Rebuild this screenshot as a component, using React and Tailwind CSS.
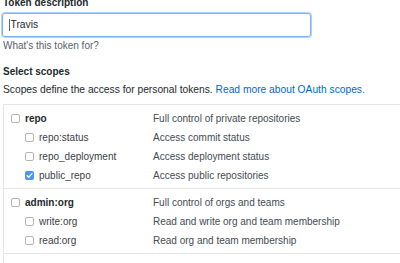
import React from "react";

const font = { fontFamily: '"Liberation Sans", Arial, Helvetica, sans-serif' };

function Box({ checked }) {
  if (checked) {
    return (
      <span className="flex h-[9px] w-[9px] shrink-0 items-center justify-center rounded-[2px] bg-[#4a96f2]">
        <svg width="7" height="7" viewBox="0 0 8 8">
          <path d="M1.3 4.2 L3.2 6 L6.8 1.8" fill="none" stroke="#fff" strokeWidth="1.5" strokeLinecap="round" strokeLinejoin="round" />
        </svg>
      </span>
    );
  }
  return <span className="h-[9px] w-[9px] shrink-0 rounded-[2px] border border-[#b5b5b5] bg-white" />;
}

function Row({ name, desc, top, checked }) {
  return (
    <div className="flex h-[19px] items-center">
      <div className={`flex w-[149px] shrink-0 items-center gap-[5px] ${top ? "pl-[7px]" : "pl-[21px]"}`}>
        <Box checked={checked} />
        <span className={top ? "font-bold text-[#24292e]" : "text-[#3b4046]"}>{name}</span>
      </div>
      <span className="text-[#444b52]">{desc}</span>
    </div>
  );
}

function Group({ rows, last }) {
  return (
    <div className={`pt-[4px] pb-[3px] ${last ? "" : "border-b border-[#e4e6e9]"}`}>
      {rows.map((r, i) => (
        <Row key={i} {...r} />
      ))}
    </div>
  );
}

export default function App() {
  return (
    <div className="h-[263px] w-[400px] overflow-hidden bg-white text-[10px] leading-[14px]" style={font}>
      <div className="flex flex-col pl-[3px]">
        <div className="mt-[-4px] font-bold text-[#24292e]">Token description</div>
        <div className="ml-[-1px] mt-[3px] flex h-[24px] w-[309px] items-center rounded-[3px] border border-[#7fb0f4] pl-[6px] shadow-[0_0_0_1px_#b3d1fa]">
          <span className="mr-[0.5px] h-[12px] w-[1px] bg-[#666]" />
          <span className="text-[10.3px] text-[#24292e]">Travis</span>
        </div>
        <div className="mt-[2px] text-[#586069]">What's this token for?</div>
        <div className="mt-[12px] font-bold text-[#24292e]">Select scopes</div>
        <div className="mt-[4px] text-[10.25px] text-[#24292e]">
          Scopes define the access for personal tokens.{" "}
          <span className="text-[#0366d6]">Read more about OAuth scopes.</span>
        </div>
        <div className="mt-[7px] w-[430px] border-l border-t border-[#e4e6e9]">
          <Group
            rows={[
              { name: "repo", desc: "Full control of private repositories", top: true },
              { name: "repo:status", desc: "Access commit status" },
              { name: "repo_deployment", desc: "Access deployment status" },
              { name: "public_repo", desc: "Access public repositories", checked: true },
            ]}
          />
          <Group
            rows={[
              { name: "admin:org", desc: "Full control of orgs and teams", top: true },
              { name: "write:org", desc: "Read and write org and team membership" },
              { name: "read:org", desc: "Read org and team membership" },
            ]}
          />
          <Group
            last
            rows={[{ name: "admin:public_key", desc: "Full control of user public keys", top: true }]}
          />
        </div>
      </div>
    </div>
  );
}
